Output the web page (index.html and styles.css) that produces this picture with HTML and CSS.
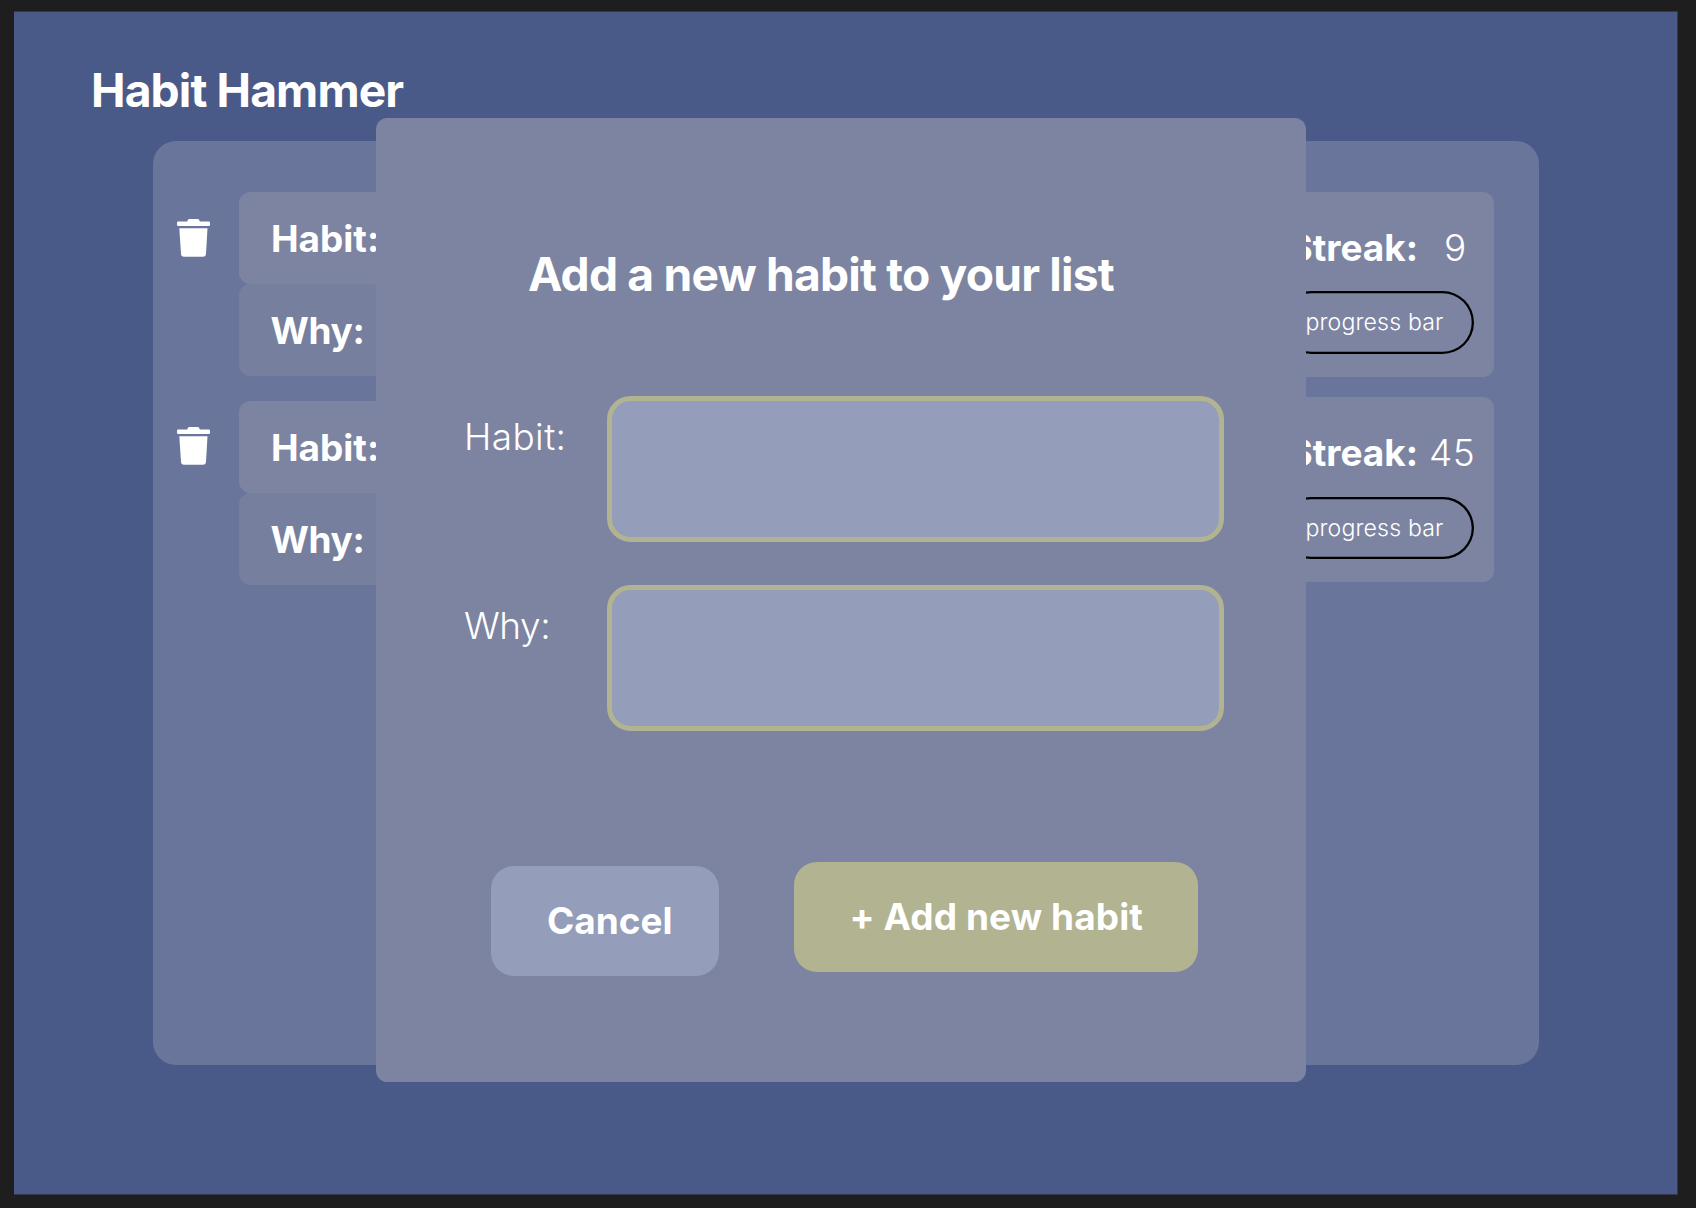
FILE: index.html
```html
<!DOCTYPE html>
<html lang="en">
<head>
<meta charset="utf-8">
<title>Habit Hammer</title>
<link rel="stylesheet" href="styles.css">
</head>
<body>
<svg class="sprite" aria-hidden="true">
  <symbol id="trash" viewBox="0 0 33 38">
    <path d="M1.2 2.4H10.200Q10.600 0 12.500 0H20.500Q22.400 0 22.800 2.400H31.800Q33 2.400 33 3.600V5.800Q33 7 31.800 7H1.200Q0 7 0 5.800V3.600Q0 2.400 1.200 2.400Z"/>
    <path d="M2.300 9.300H30.500L29 34.800Q28.800 37.800 26 37.800H7Q4.200 37.800 4 34.800Z"/>
  </symbol>
</svg>
<main class="app">
  <h1 class="brand">Habit Hammer</h1>
  <section class="board">
    <div class="habits">
      <article class="habit">
        <svg class="trash"><use href="#trash"/></svg>
        <div class="fields">
          <div class="field">Habit:</div>
          <div class="field field-why">Why:</div>
        </div>
      </article>
      <article class="habit">
        <svg class="trash trash-second"><use href="#trash"/></svg>
        <div class="fields">
          <div class="field">Habit:</div>
          <div class="field field-why">Why:</div>
        </div>
      </article>
    </div>
    <div class="streaks">
      <article class="streak">
        <div class="streak-line"><span class="streak-label">Streak:</span><span class="streak-value single">9</span></div>
        <div class="progress">progress bar</div>
      </article>
      <article class="streak">
        <div class="streak-line"><span class="streak-label">Streak:</span><span class="streak-value">45</span></div>
        <div class="progress progress-second">progress bar</div>
      </article>
    </div>
  </section>
  <form class="modal">
    <h2 class="modal-title">Add a new habit to your list</h2>
    <div class="entry"><label class="entry-label" for="habit">Habit:</label><input class="entry-input" id="habit"></div>
    <div class="entry"><label class="entry-label entry-label-why" for="why">Why:</label><input class="entry-input" id="why"></div>
    <div class="actions">
      <button class="button cancel" type="button">Cancel</button>
      <button class="button add" type="button">+ Add new habit</button>
    </div>
  </form>
</main>
</body>
</html>
```
FILE: styles.css
```css
* {
  box-sizing: border-box;
}

body {
  margin: 0;
  height: 1208px;
  padding: 11px 18px 13px 14px;
  overflow: hidden;
  background: #1e1e1e;
  color: #fff;
  font-family: Inter, "Liberation Sans", sans-serif;
}

.sprite {
  display: none;
}

.app {
  position: relative;
  height: 1184px;
  border: solid #35384e;
  border-width: 1px 1px 1px 0;
  background: #4a5a88;
}

.brand {
  margin: 0;
  padding: 50px 0 0 77px;
  height: 129px;
  font-size: 46.2px;
  line-height: 56px;
  font-weight: 700;
  letter-spacing: -0.019em;
}

.board {
  display: flex;
  justify-content: space-between;
  width: 1386px;
  height: 924px;
  margin-left: 139px;
  padding: 51px 45px 0 24px;
  border-radius: 23px;
  background: #6a759b;
}

.habits {
  display: flex;
  flex-direction: column;
  gap: 24.2px;
}

.habit {
  display: flex;
  gap: 29px;
}

.trash {
  width: 33px;
  height: 38px;
  margin-top: 27px;
  fill: #fff;
}

.trash-second {
  margin-top: 26px;
}

.fields {
  width: 800px;
}

.field {
  height: 92.2px;
  padding: 1px 0 0 32px;
  border-radius: 11.5px;
  background: #7d84a1;
  font-size: 36.96px;
  line-height: 92.2px;
  font-weight: 700;
}

.field-why {
  padding-left: 31.5px;
  background: #767f9e;
  letter-spacing: -0.3px;
}

.streaks {
  display: flex;
  flex-direction: column;
  gap: 20.5px;
}

.streak {
  display: flex;
  flex-direction: column;
  gap: 21px;
  width: 300px;
  height: 184.6px;
  padding: 33px 20px 0 0;
  border-radius: 11.5px;
  background: #7d84a1;
}

.streak-line {
  display: flex;
  justify-content: flex-end;
  margin-right: -20px;
  height: 45px;
  font-size: 36.96px;
  line-height: 45px;
}

.streak-label {
  font-weight: 700;
}

.streak-value {
  width: 76px;
  padding-left: 11px;
  font-weight: 340;
  letter-spacing: 0.4px;
}

.single {
  padding-left: 26px;
}

.progress {
  align-self: flex-end;
  width: 194px;
  height: 62.5px;
  padding-left: 25.5px;
  border-radius: 32px;
  box-shadow: inset 0 0 0 2.3px #000;
  font-size: 23.1px;
  line-height: 62.5px;
  font-weight: 340;
  letter-spacing: 0.15px;
}

.progress-second {
  margin-top: 0.5px;
}

.modal {
  position: absolute;
  left: 362px;
  top: 106px;
  width: 930px;
  height: 964px;
  padding: 128px 82px 0 88px;
  border-radius: 11.5px;
  background: #7d84a1;
}

.modal-title {
  margin: 0 0 94px;
  padding-left: 64px;
  font-size: 46.2px;
  line-height: 56px;
  font-weight: 700;
  letter-spacing: -0.0175em;
}

.entry {
  display: flex;
  justify-content: space-between;
  height: 146px;
  margin-bottom: 43px;
}

.entry-label {
  padding-top: 18px;
  font-size: 36.96px;
  line-height: 45px;
  font-weight: 340;
  letter-spacing: 0.4px;
}

.entry-label-why {
  letter-spacing: -0.4px;
}

.entry-input {
  width: 617px;
  height: 146px;
  padding: 0 20px;
  border: 5px solid #b1b391;
  border-radius: 23.5px;
  outline: 0;
  background: #949db9;
  color: #fff;
  font: 400 36.96px Inter, "Liberation Sans", sans-serif;
}

.actions {
  display: flex;
  align-items: flex-start;
  gap: 75px;
  padding: 88px 0 0 27px;
}

.button {
  height: 110px;
  padding: 0;
  border: 0;
  border-radius: 23px;
  color: #fff;
  font: 700 36.96px/110px Inter, "Liberation Sans", sans-serif;
  text-align: left;
}

.cancel {
  width: 228px;
  margin-top: 4px;
  padding-left: 56px;
  background: #949db9;
}

.add {
  width: 404px;
  padding-left: 55.5px;
  letter-spacing: 0.1px;
  background: #b1b391;
}
```
